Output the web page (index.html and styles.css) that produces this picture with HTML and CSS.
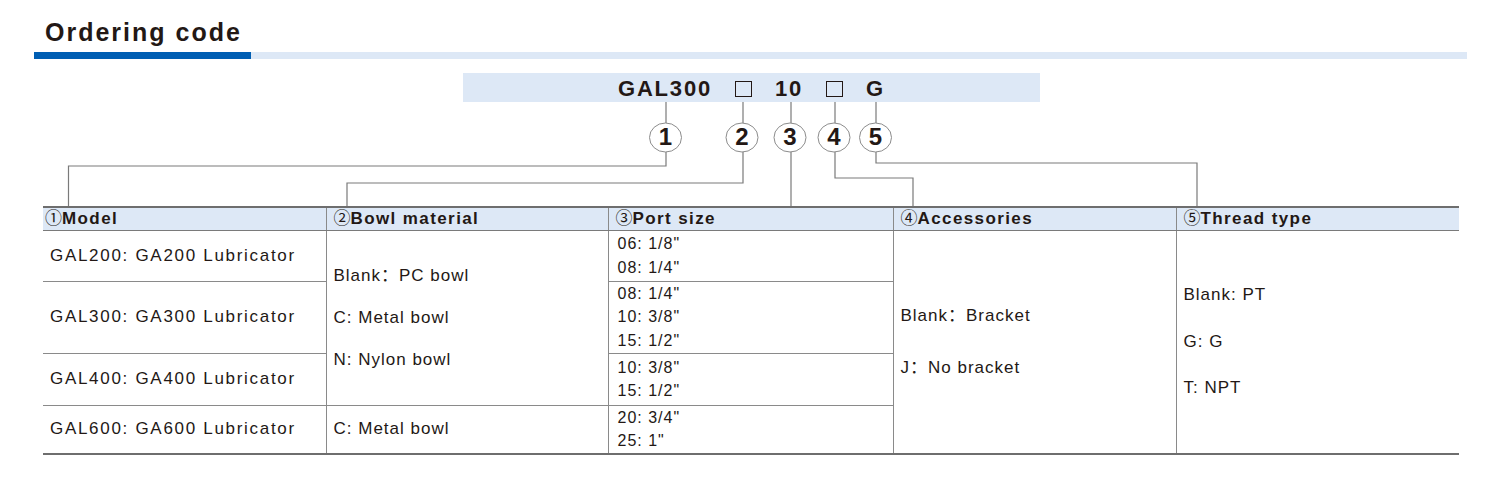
FILE: index.html
```html
<!DOCTYPE html>
<html lang="en">
<head>
  <meta charset="UTF-8" />
  <title>Ordering code – GAL lubricator</title>
  <link rel="stylesheet" href="styles.css">
</head>
<body>
  <div class="page">
    <h1>Ordering code</h1>
    <div class="title-bar">
      <span class="bar-dark"></span>
      <span class="bar-light"></span>
    </div>

    <div class="code-box">
      <span class="code-part">GAL300</span>
      <span class="code-slot"></span>
      <span class="code-part">10</span>
      <span class="code-slot"></span>
      <span class="code-part">G</span>
    </div>

    <svg class="leaders" width="1499" height="104" viewBox="0 0 1499 104">
      <g class="wire">
        <polyline points="666,0 666,21" />
        <polyline points="666,49 666,64 68.5,64 68.5,104" />
        <polyline points="743,0 743,21" />
        <polyline points="743,49 743,81 347,81 347,104" />
        <polyline points="791,0 791,21" />
        <polyline points="791,49 791,104" />
        <polyline points="835,0 835,21" />
        <polyline points="835,49 835,76 913,76 913,104" />
        <polyline points="876,0 876,21" />
        <polyline points="876,49 876,61 1197,61 1197,104" />
      </g>
      <g class="bubble">
        <ellipse cx="665.5" cy="35.5" rx="16" ry="14.5" />
        <ellipse cx="742" cy="35.5" rx="16" ry="14.5" />
        <ellipse cx="790" cy="35.5" rx="16" ry="14.5" />
        <ellipse cx="834" cy="35.5" rx="16" ry="14.5" />
        <ellipse cx="875.5" cy="35.5" rx="16" ry="14.5" />
      </g>
      <g class="bubble-num">
        <text x="665.5" y="43">1</text>
        <text x="742" y="43">2</text>
        <text x="790" y="43">3</text>
        <text x="834" y="43">4</text>
        <text x="875.5" y="43">5</text>
      </g>
    </svg>

    <table class="code-table">
      <colgroup>
        <col style="width:283px">
        <col style="width:282px">
        <col style="width:285px">
        <col style="width:283px">
        <col style="width:283px">
      </colgroup>
      <thead>
        <tr class="head-row">
          <th class="first"><span class="num">①</span>Model</th>
          <th><span class="num">②</span>Bowl material</th>
          <th><span class="num">③</span>Port size</th>
          <th><span class="num">④</span>Accessories</th>
          <th><span class="num">⑤</span>Thread type</th>
        </tr>
      </thead>
      <tbody>
        <tr class="row-1">
          <td class="model">GAL200: GA200 Lubricator</td>
          <td class="bowl split" rowspan="3">
            <p>Blank：PC bowl</p>
            <p>C: Metal bowl</p>
            <p>N: Nylon bowl</p>
          </td>
          <td class="port">06: 1/8"<br>08: 1/4"</td>
          <td class="acc" rowspan="4">
            <p>Blank：Bracket</p>
            <p>J：No bracket</p>
          </td>
          <td class="thread" rowspan="4">
            <p>Blank: PT</p>
            <p>G: G</p>
            <p>T: NPT</p>
          </td>
        </tr>
        <tr class="row-2">
          <td class="model">GAL300: GA300 Lubricator</td>
          <td class="port">08: 1/4"<br>10: 3/8"<br>15: 1/2"</td>
        </tr>
        <tr class="row-3">
          <td class="model">GAL400: GA400 Lubricator</td>
          <td class="port">10: 3/8"<br>15: 1/2"</td>
        </tr>
        <tr class="row-4">
          <td class="model">GAL600: GA600 Lubricator</td>
          <td class="bowl"><p>C: Metal bowl</p></td>
          <td class="port">20: 3/4"<br>25: 1"</td>
        </tr>
      </tbody>
    </table>
  </div>
</body>
</html>
```

FILE: styles.css
```css
body {
  margin: 0;
  background: #fff;
  color: #231815;
  font-family: "Liberation Sans", Arial, "Noto Sans CJK SC", sans-serif;
}
.page {
  width: 1499px;
  padding-top: 17px;
}
h1 {
  margin: 0;
  padding-left: 45px;
  font-size: 25px;
  line-height: 30px;
  font-weight: bold;
  letter-spacing: 2px;
}
.title-bar {
  display: flex;
  margin: 5px 0 0 34px;
  width: 1433px;
  height: 7px;
}
.bar-dark {
  width: 217px;
  background: #005eb3;
}
.bar-light {
  flex: 1;
  background: #dde8f6;
}
.code-box {
  display: flex;
  justify-content: center;
  align-items: center;
  gap: 23px;
  margin: 14px 0 0 463px;
  width: 577px;
  height: 29px;
  padding-top: 2px;
  box-sizing: border-box;
  background: #dde8f6;
  font-size: 22px;
  font-weight: bold;
  letter-spacing: 1.8px;
}
.code-part {
  line-height: 26px;
}
.code-slot {
  width: 15px;
  height: 14px;
  border: 1.5px solid #231815;
  margin-top: 1px;
}
.leaders {
  display: block;
}
.wire polyline {
  fill: none;
  stroke: #7a7a7a;
  stroke-width: 1.2;
}
.bubble ellipse {
  fill: #fff;
  stroke: #8c8c8c;
  stroke-width: 1;
}
.bubble-num text {
  font-family: "Liberation Sans", Arial, sans-serif;
  font-size: 24px;
  font-weight: bold;
  fill: #231815;
  text-anchor: middle;
}
.code-table {
  margin-left: 43px;
  width: 1416px;
  table-layout: fixed;
  border-collapse: collapse;
  border-top: 2px solid #6e6e6e;
  border-bottom: 2px solid #6e6e6e;
}
.code-table th,
.code-table td {
  border-left: 1px solid #8a8a8a;
  padding: 0 0 0 7px;
  vertical-align: middle;
  text-align: left;
}
.code-table th:first-child,
.code-table td.model {
  border-left: none;
}
.head-row {
  height: 23px;
  background: #dde8f6;
}
.head-row th {
  border-bottom: 1px solid #7a7a7a;
  font-size: 17px;
  font-weight: bold;
  line-height: 20px;
  letter-spacing: 1.4px;
  padding-top: 1px;
}
.head-row th.first {
  padding-left: 2px;
}
.num {
  font-family: "Noto Sans CJK JP", "DejaVu Sans", sans-serif;
  font-weight: normal;
  font-size: 17px;
  line-height: 0;
  letter-spacing: 0;
}
.code-table td {
  font-size: 17px;
  letter-spacing: 1px;
}
.code-table td p {
  margin: 0;
}
.row-1 { height: 51px; }
.row-2 { height: 72px; }
.row-3 { height: 52px; }
.row-4 { height: 49px; }
.row-1 td.model,
.row-2 td.model,
.row-3 td.model,
.row-1 td.port,
.row-2 td.port,
.row-3 td.port,
td.bowl.split {
  border-bottom: 1px solid #8a8a8a;
}
td.model {
  letter-spacing: 1.7px;
}
td.bowl p {
  line-height: 42px;
}
td.port {
  padding-left: 9px;
  line-height: 23.5px;
  font-size: 16px;
}
td.acc p {
  line-height: 52px;
}
td.thread p {
  line-height: 46.5px;
}
```
